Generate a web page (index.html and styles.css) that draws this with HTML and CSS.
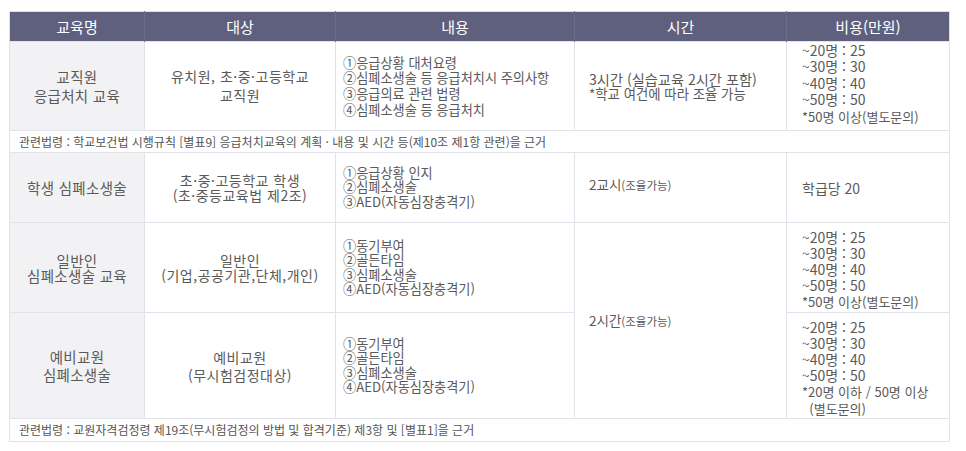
FILE: index.html
```html
<!DOCTYPE html>
<html lang="ko">
<head>
<meta charset="utf-8">
<title>교육 안내</title>
<link rel="stylesheet" href="styles.css">
</head>
<body>
<table class="edu">
  <colgroup>
    <col class="c1"><col class="c2"><col class="c3"><col class="c4"><col class="c5">
  </colgroup>
  <thead>
    <tr><th>교육명</th><th>대상</th><th>내용</th><th>시간</th><th>비용(만원)</th></tr>
  </thead>
  <tbody>
    <tr class="r1">
      <td class="name lh19">교직원<br>응급처치 교육</td>
      <td class="target lh19">유치원, 초·중·고등학교<br>교직원</td>
      <td class="content lh16">①응급상황 대처요령<br>②심폐소생술 등 응급처치시 주의사항<br>③응급의료 관련 법령<br>④심폐소생술 등 응급처치</td>
      <td class="time"><span class="big">3시간 (실습교육 2시간 포함)</span><br><span class="sm">*학교 여건에 따라 조율 가능</span></td>
      <td class="cost c-up">~20명 : 25<br>~30명 : 30<br>~40명 : 40<br>~50명 : 50<br><span class="sm">*50명 이상(별도문의)</span></td>
    </tr>
    <tr class="note n1">
      <td colspan="5">관련법령 : 학교보건법 시행규칙 [별표9] 응급처치교육의 계획 · 내용 및 시간 등(제10조 제1항 관련)을 근거</td>
    </tr>
    <tr class="r2">
      <td class="name">학생 심폐소생술</td>
      <td class="target lh15">초·중·고등학교 학생<br>(초·중등교육법 제2조)</td>
      <td class="content lh14">①응급상황 인지<br>②심폐소생술<br>③AED(자동심장충격기)</td>
      <td class="time up">2교시<span class="xs">(조율가능)</span></td>
      <td class="cost">학급당 20</td>
    </tr>
    <tr class="r3">
      <td class="name lh15">일반인<br>심폐소생술 교육</td>
      <td class="target lh15">일반인<br>(기업,공공기관,단체,개인)</td>
      <td class="content lh14">①동기부여<br>②골든타임<br>③심폐소생술<br>④AED(자동심장충격기)</td>
      <td class="time" rowspan="2">2시간<span class="xs">(조율가능)</span></td>
      <td class="cost c-down">~20명 : 25<br>~30명 : 30<br>~40명 : 40<br>~50명 : 50<br><span class="sm">*50명 이상(별도문의)</span></td>
    </tr>
    <tr class="r4">
      <td class="name lh18">예비교원<br>심폐소생술</td>
      <td class="target lh18">예비교원<br>(무시험검정대상)</td>
      <td class="content lh14">①동기부여<br>②골든타임<br>③심폐소생술<br>④AED(자동심장충격기)</td>
      <td class="cost c-down2">~20명 : 25<br>~30명 : 30<br>~40명 : 40<br>~50명 : 50<br><span class="sm">*20명 이하 / 50명 이상<br>&nbsp;&nbsp;(별도문의)</span></td>
    </tr>
    <tr class="note n2">
      <td colspan="5">관련법령 : 교원자격검정령 제19조(무시험검정의 방법 및 합격기준) 제3항 및 [별표1]을 근거</td>
    </tr>
  </tbody>
</table>
</body>
</html>
```

FILE: styles.css
```css
html, body {
  margin: 0;
  padding: 0;
  background: #ffffff;
}
body {
  padding: 11px 0 0 9px;
  font-family: "Noto Sans CJK KR", "Noto Sans", sans-serif;
  color: #5a5a5a;
}
.edu {
  border-collapse: collapse;
  table-layout: fixed;
  width: 940px;
  border: 1px solid #dedee8;
}
.c1 { width: 135px; }
.c2 { width: 191px; }
.c3 { width: 239px; }
.c4 { width: 212px; }
.c5 { width: 163px; }

.edu th {
  background: #5f5f7e;
  color: #ffffff;
  font-weight: 400;
  font-size: 15px;
  height: 29px;
  padding: 0;
  line-height: 29px;
  text-align: center;
  border-left: 1px solid #6d6d8a;
}
.edu th:first-child { border-left: none; }

.edu td {
  border: 1px solid #e2e2ea;
  padding: 0;
  vertical-align: middle;
}
.r1 td { height: 88px; }
.r2 td { height: 69px; }
.r3 td { height: 89px; }
.r4 td { height: 105px; }

.name {
  background: #f2f2f4;
  text-align: center;
  font-size: 14.5px;
  letter-spacing: 0.3px;
  line-height: 19px;
}
.target {
  text-align: center;
  font-size: 14px;
  letter-spacing: 0.5px;
  line-height: 19px;
}
.content {
  font-size: 13.2px;
  padding-left: 7px !important;
  line-height: 15.6px;
}
.time {
  font-size: 13.5px;
  line-height: 14px;
  padding-left: 14px !important;
}
.time .big { font-size: 14.2px; line-height: 14px; }
.time .sm { font-size: 13.4px; line-height: 14px; }
.r2 .time.up { padding-bottom: 7px !important; height: 62px; }
.cost {
  font-size: 14px;
  line-height: 16px;
  padding-left: 15px !important;
}
.r1 .cost.c-up { line-height: 16.4px; padding-bottom: 5px; height: 83px; }
.r1 .cost.c-up .sm { line-height: 16.4px; }
.r3 .cost.c-down { padding-top: 4px; height: 85px; }
.r4 .cost.c-down2 { padding-top: 5px; height: 100px; }
.sm { font-size: 13px; }
.xs { font-size: 11.5px; }

.lh19 { line-height: 19px; }
.lh18 { line-height: 18px; }
.lh16 { line-height: 15.7px; }
.lh15 { line-height: 15px; }
.lh14 { line-height: 14.4px; }

.note td {
  font-size: 12px;
  padding-left: 9px;
  height: 21px;
  line-height: 14px;
  color: #555555;
}
.n2 td { height: 22px; }
```
